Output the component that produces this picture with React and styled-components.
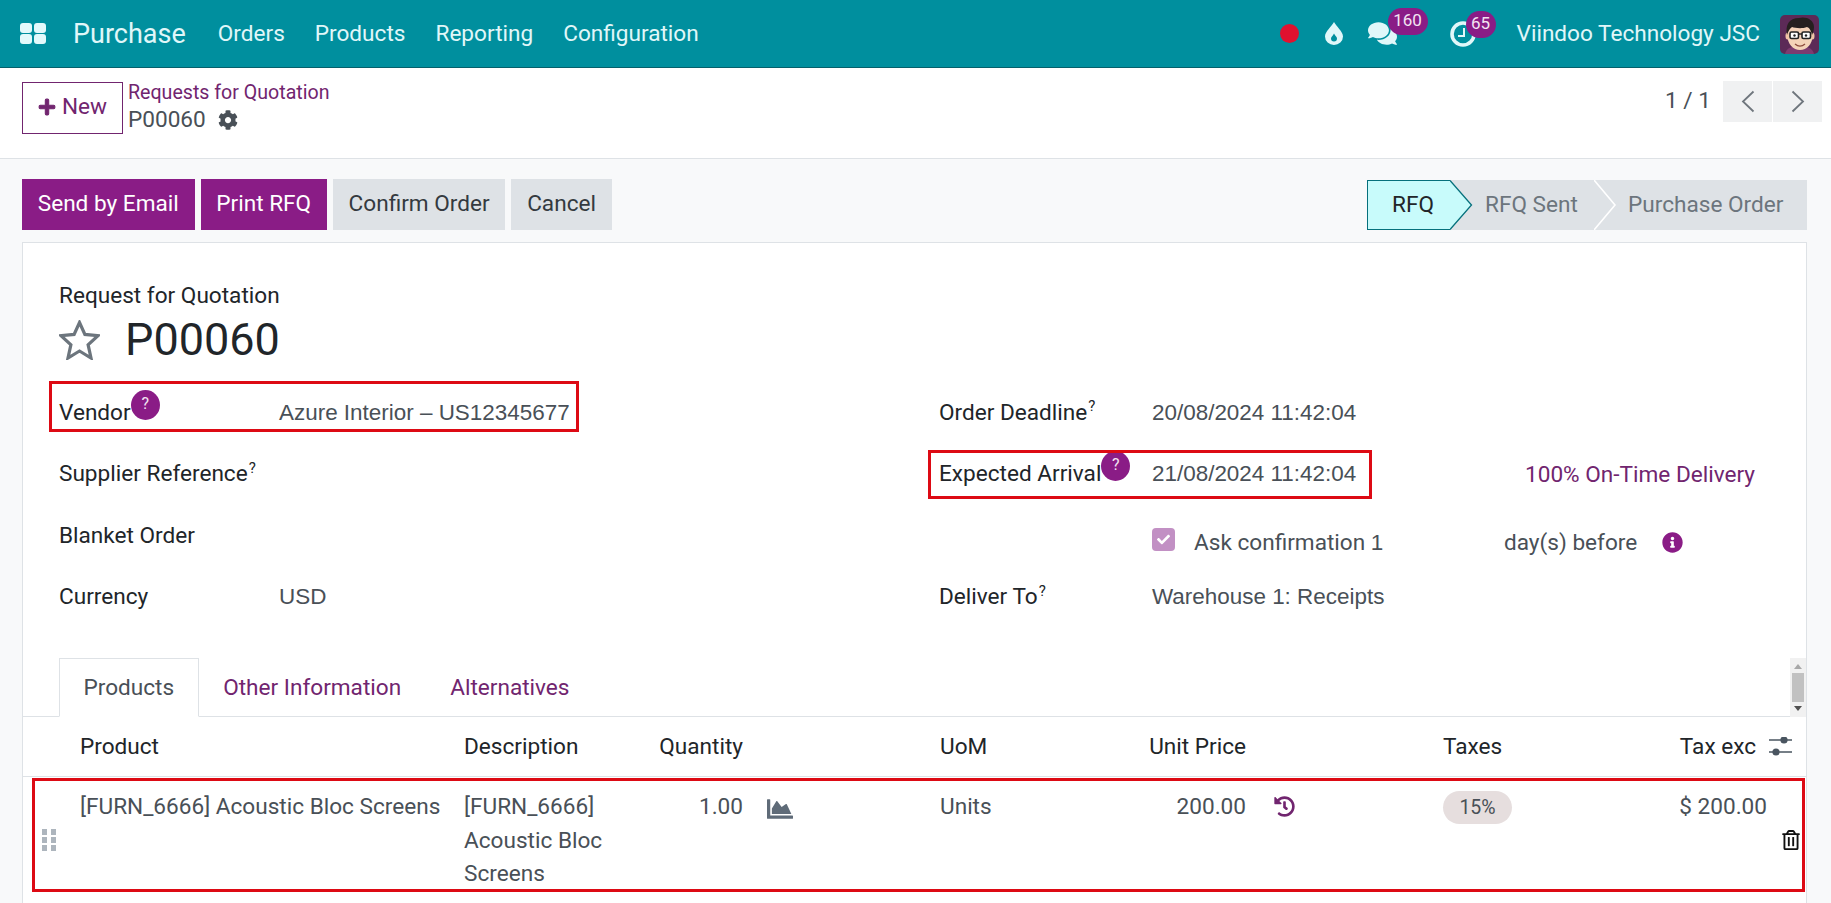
import React from 'react';
import styled, { createGlobalStyle } from 'styled-components';
import {
  FaPlus, FaCog, FaComments, FaChartArea, FaHistory, FaRegTrashAlt, FaInfoCircle, FaCheck,
} from 'react-icons/fa';

const purple = '#8a1c86';
const link = '#71256f';
const navText = '#e0f7f9';
const columns = '57px 384px 176px 103px 197px 170px 136px 197px 197px 127px 40px';

const GlobalStyle = createGlobalStyle`
  html, body { margin: 0; height: 100%; overflow: hidden; }
  body {
    background: #f8f9fa;
    color: #212529;
    font-family: Roboto, "Liberation Sans", sans-serif;
    font-size: 22.6px;
    line-height: 30px;
  }
`;

const Page = styled.div`
  height: 903px;
  display: flex;
  flex-direction: column;
`;

const Navbar = styled.header`
  height: 67px;
  flex: none;
  display: flex;
  align-items: center;
  background: #008f9e;
  border-bottom: 1px solid #05606b;
  color: ${navText};
  padding: 0 12px 0 20px;
`;

const AppsGrid = styled.div`
  display: grid;
  grid-template-columns: 12px 12px;
  grid-template-rows: 10px 10px;
  gap: 1px 2px;
  margin-right: 27px;
  span { background: #e3f9fb; border-radius: 3px; }
`;

const Brand = styled.span`
  font-size: 27px;
  margin-right: 32px;
`;

const NavMenu = styled.nav`
  display: flex;
  gap: 30px;
  padding-top: 1px;
`;

const NavTools = styled.div`
  margin-left: auto;
  display: flex;
  align-items: center;
`;

const RecordDot = styled.span`
  width: 19px;
  height: 19px;
  border-radius: 50%;
  background: #e0112f;
  margin-right: 26px;
`;

const NavIcon = styled.span`
  position: relative;
  display: flex;
  margin-right: ${p => p.$gap}px;
`;

const Counter = styled.span`
  position: absolute;
  left: ${p => p.$left}px;
  top: ${p => p.$top}px;
  min-width: ${p => p.$width}px;
  height: 27px;
  border-radius: 14px;
  background: ${purple};
  color: #f3e4f2;
  font-size: 17px;
  line-height: 25px;
  text-align: center;
`;

const Company = styled.span`
  margin-right: 20px;
  padding-top: 1px;
`;

const Avatar = styled.svg`
  width: 39px;
  height: 39px;
  margin-top: 2px;
`;

const ControlPanel = styled.section`
  height: 91px;
  flex: none;
  box-sizing: border-box;
  display: flex;
  justify-content: space-between;
  background: #fff;
  border-bottom: 1px solid #dee2e6;
  padding: 13px 9px 0 22px;
`;

const PanelLeft = styled.div`
  display: flex;
  gap: 5px;
`;

const NewButton = styled.button`
  width: 101px;
  height: 52px;
  margin-top: 1px;
  display: flex;
  align-items: center;
  justify-content: center;
  gap: 6px;
  background: #fff;
  border: 1px solid ${link};
  color: ${link};
  font: inherit;
  padding: 0 0 2px;
`;

const Crumbs = styled.div`
  display: flex;
  flex-direction: column;
  margin-top: -2px;
`;

const CrumbLink = styled.a`
  color: ${link};
  font-size: 19.6px;
  line-height: 28px;
`;

const CrumbCurrent = styled.div`
  display: flex;
  align-items: center;
  gap: 12px;
  color: #495057;
  line-height: 25px;
`;

const Pager = styled.div`
  display: flex;
  align-items: flex-start;
  color: #495057;
`;

const PagerCount = styled.span`
  margin: 5px 12px 0 0;
`;

const PagerButton = styled.button`
  width: 49px;
  height: 41px;
  margin-left: ${p => (p.$next ? 1 : 0)}px;
  display: flex;
  align-items: center;
  justify-content: center;
  background: #f0f1f2;
  border: 0;
  padding: 0;
`;

const ActionBar = styled.section`
  flex: none;
  display: flex;
  justify-content: space-between;
  align-items: flex-start;
  padding: 20px 24px 12px 22px;
`;

const Actions = styled.div`
  display: flex;
  gap: 6px;
`;

const ActionButton = styled.button`
  height: 51px;
  padding: 0 15.75px 2px;
  border: 0;
  font: inherit;
  background: ${p => (p.$primary ? purple : '#dee2e6')};
  color: ${p => (p.$primary ? '#fff' : '#343a40')};
`;

const StatusBar = styled.div`
  display: flex;
  height: 50px;
  margin-top: 1px;
`;

const Stage = styled.div`
  position: relative;
  z-index: ${p => p.$z};
  box-sizing: border-box;
  width: ${p => p.$width}px;
  padding-left: ${p => p.$pad}px;
  line-height: 48px;
  background: ${p => (p.$current ? '#c8fbfb' : '#dee2e6')};
  color: ${p => (p.$current ? '#212529' : '#6c757d')};
  border: ${p => (p.$current ? '1px solid #05707c' : '0')};
  border-right: 0;
  ${p => !p.$current && 'line-height: 50px;'}
`;

const StageTip = styled.svg`
  position: absolute;
  left: 100%;
  top: ${p => (p.$current ? -1 : 0)}px;
  width: 23px;
  height: 50px;
`;

const Sheet = styled.main`
  flex: 1;
  min-height: 0;
  margin: 0 24px 0 22px;
  background: #fff;
  border: 1px solid #dee2e6;
  border-bottom: 0;
`;

const SheetHead = styled.div`
  padding: 38px 0 0 36px;
`;

const TitleRow = styled.div`
  display: flex;
  align-items: center;
  gap: 25px;
  margin-top: 2px;
`;

const Title = styled.h1`
  margin: 0;
  font-size: 45px;
  font-weight: 400;
  line-height: 54px;
`;

const FieldGroups = styled.div`
  display: grid;
  grid-template-columns: 880px 1fr;
  margin: 15px 0 30px 36px;
`;

const FieldColumn = styled.div`
  display: grid;
  grid-auto-rows: 61.5px;
`;

const FieldRow = styled.div`
  position: relative;
  display: grid;
  grid-template-columns: ${p => p.$cols};
  align-items: center;
  padding-top: ${p => p.$shift || 0}px;
`;

const Label = styled.label`
  position: relative;
  justify-self: start;
  color: #212529;
  sup {
    font-size: 15px;
    line-height: 0;
    margin-left: 1px;
  }
`;

const HelpBadge = styled.span`
  position: absolute;
  left: 100%;
  top: -8px;
  width: 29px;
  height: 30px;
  border-radius: 50%;
  background: ${purple};
  color: #f3e4f2;
  font-size: 16px;
  line-height: 27px;
  text-align: center;
`;

/* form inputs fall back to an Arial-width face in the original */
const Value = styled.span`
  color: #495057;
  font-family: "Liberation Sans", Arial, sans-serif;
  font-size: 22.45px;
`;

const DeliveryLink = styled.a`
  color: ${link};
  padding-top: 1px;
`;

const RedMark = styled.span`
  position: absolute;
  left: ${p => p.$left}px;
  top: ${p => p.$top}px;
  width: ${p => p.$width}px;
  height: ${p => p.$height}px;
  box-sizing: border-box;
  border: 3px solid #dd0a14;
  pointer-events: none;
`;

const AskRow = styled.div`
  display: flex;
  align-items: center;
  color: #495057;
`;

const CheckBox = styled.span`
  width: 23px;
  height: 23px;
  margin: 0 19px 7px 0;
  display: flex;
  align-items: center;
  justify-content: center;
  border-radius: 4px;
  background: #c290c4;
  color: #fff;
`;

const AskText = styled.span`
  width: 310px;
`;

const BeforeText = styled.span`
  margin-right: 25px;
`;

const TabBar = styled.div`
  display: flex;
  height: 59px;
  padding-left: 36px;
  border-bottom: 1px solid #dee2e6;
  box-sizing: border-box;
`;

const Tab = styled.a`
  padding: 0 23.5px;
  line-height: 58px;
  height: 59px;
  box-sizing: border-box;
  color: ${p => (p.$active ? '#495057' : link)};
  background: ${p => (p.$active ? '#fff' : 'transparent')};
  border: 1px solid ${p => (p.$active ? '#dee2e6' : 'transparent')};
  border-bottom-color: ${p => (p.$active ? '#fff' : 'transparent')};
`;

const ScrollTrack = styled.div`
  margin-left: auto;
  width: 16px;
  height: 59px;
  display: flex;
  flex-direction: column;
  align-items: center;
  justify-content: space-between;
  background: #f1f1f1;
  padding: 6px 0;
  box-sizing: border-box;
`;

const ScrollArrow = styled.span`
  width: 0;
  height: 0;
  border-left: 4px solid transparent;
  border-right: 4px solid transparent;
  border-bottom: ${p => (p.$down ? '0' : '5px solid #a8a8a8')};
  border-top: ${p => (p.$down ? '5px solid #505050' : '0')};
`;

const ScrollThumb = styled.span`
  width: 12px;
  height: 29px;
  background: #c1c1c1;
`;

const TableHead = styled.div`
  display: grid;
  grid-template-columns: ${columns};
  height: 60px;
  box-sizing: border-box;
  align-items: center;
  border-bottom: 1px solid #dee2e6;
`;

const TableRow = styled.div`
  position: relative;
  display: grid;
  grid-template-columns: ${columns};
  padding: 13px 0 10px;
  color: #495057;
  line-height: 33.5px;
`;

const HeadCell = styled.div`
  grid-column: ${p => p.$col};
  text-align: ${p => (p.$right ? 'right' : 'left')};
  padding-right: ${p => p.$pad || 0}px;
`;

const Cell = styled.div`
  grid-column: ${p => p.$col};
  text-align: ${p => (p.$right ? 'right' : 'left')};
`;

const IconCell = styled.div`
  grid-column: ${p => p.$col};
  display: flex;
  align-items: flex-start;
  padding: 6px 0 0 ${p => p.$pad}px;
  color: ${p => p.$color};
`;

const SideCell = styled.div`
  grid-column: ${p => p.$col};
  align-self: center;
  display: flex;
  padding-left: ${p => p.$pad}px;
`;

const TaxPill = styled.span`
  display: inline-block;
  width: 69px;
  height: 33px;
  border-radius: 17px;
  background: #e6dede;
  font-size: 19.5px;
  text-align: center;
`;

const Sliders = () => (
  <svg width="23" height="19" viewBox="0 0 23 19">
    <path d="M0 3h23M0 15h23" stroke="#4a5560" strokeWidth="1.4" />
    <circle cx="15" cy="3" r="3.6" fill="#4a5560" />
    <circle cx="7" cy="15" r="3.6" fill="#4a5560" />
  </svg>
);

const Grip = () => (
  <svg width="14" height="22" viewBox="0 0 14 22" fill="#adb5bd">
    <rect x="0" y="0" width="5" height="6" />
    <rect x="9" y="0" width="5" height="6" />
    <rect x="0" y="8" width="5" height="6" />
    <rect x="9" y="8" width="5" height="6" />
    <rect x="0" y="16" width="5" height="6" />
    <rect x="9" y="16" width="5" height="6" />
  </svg>
);

const Star = () => (
  <svg width="41" height="40" viewBox="0 0 41 40">
    <polygon
      points="20.5,2.500 25.9,14.400 39,15.700 29.100,24.700 32,38 20.500,31 9,38 11.900,24.700 2,15.700 15.100,14.400"
      fill="none"
      stroke="#6c757d"
      strokeWidth="3.2"
    />
  </svg>
);

const Chevron = ({ left }) => (
  <svg width="14" height="23" viewBox="0 0 14 23">
    <path
      d={left ? 'M12.5 1.5 L2 11.5 L12.5 21.5' : 'M1.5 1.5 L12 11.5 L1.5 21.5'}
      fill="none"
      stroke="#6f767d"
      strokeWidth="1.8"
    />
  </svg>
);

const Droplet = () => (
  <svg width="18" height="23" viewBox="0 0 18 23">
    <path d="M9 0C7 4 0 9.500 0 14.500A9 8.500 0 0 0 18 14.500C18 9.500 11 4 9 0Z" fill={navText} />
    <path d="M9 11.500C8 13.500 6 15 6 16.500A3 3 0 0 0 12 16.500C12 15 10 13.500 9 11.500Z" fill="#008f9e" />
  </svg>
);

const ClockRing = () => (
  <svg width="26" height="26" viewBox="0 0 26 26">
    <circle cx="13" cy="13" r="11" fill="none" stroke={navText} strokeWidth="3.6" />
    <path d="M14 7v8H8" fill="none" stroke={navText} strokeWidth="2" />
  </svg>
);

const Face = () => (
  <Avatar viewBox="0 0 39 39">
    <rect width="39" height="39" rx="5" fill="#5c2a57" />
    <path d="M5 39C6 33 12 31 19 31s14 2 15 8Z" fill="#7d3b70" />
    <ellipse cx="20" cy="21" rx="12.500" ry="14" fill="#f4d2b8" />
    <ellipse cx="7.500" cy="21" rx="2" ry="3.500" fill="#f0c4a6" />
    <ellipse cx="32.500" cy="21" rx="2" ry="3.500" fill="#f0c4a6" />
    <path d="M7 20C5 10 9 3 19 3c6-2 15 1 15 9 0 3-1 6-2 8-1-4-2-7-5-8-5 2-12 1-15 0-3 2-4 5-5 8Z" fill="#26201f" />
    <rect x="10" y="17" width="8.500" height="6.500" rx="1.500" fill="#fff" stroke="#222" strokeWidth="1.6" />
    <rect x="22" y="17" width="8.500" height="6.500" rx="1.500" fill="#fff" stroke="#222" strokeWidth="1.6" />
    <path d="M18.500 19h3.500" stroke="#222" strokeWidth="1.4" />
    <circle cx="14.500" cy="20.500" r="1.200" fill="#222" />
    <circle cx="26" cy="20.500" r="1.200" fill="#222" />
    <path d="M15 29c3 2.500 7 2.500 10 0" fill="none" stroke="#8c4a3c" strokeWidth="1.3" />
  </Avatar>
);

const App = () => (
  <Page>
    <GlobalStyle />
    <Navbar>
      <AppsGrid><span /><span /><span /><span /></AppsGrid>
      <Brand>Purchase</Brand>
      <NavMenu>
        <span>Orders</span>
        <span>Products</span>
        <span>Reporting</span>
        <span>Configuration</span>
      </NavMenu>
      <NavTools>
        <RecordDot />
        <NavIcon $gap={25}><Droplet /></NavIcon>
        <NavIcon $gap={53}>
          <FaComments size={29} />
          <Counter $left={20} $top={-11} $width={40}>160</Counter>
        </NavIcon>
        <NavIcon $gap={41}>
          <ClockRing />
          <Counter $left={16} $top={-10} $width={30}>65</Counter>
        </NavIcon>
        <Company>Viindoo Technology JSC</Company>
        <Face />
      </NavTools>
    </Navbar>

    <ControlPanel>
      <PanelLeft>
        <NewButton><FaPlus size={18} stroke="currentColor" strokeWidth={30} />New</NewButton>
        <Crumbs>
          <CrumbLink>Requests for Quotation</CrumbLink>
          <CrumbCurrent>P00060 <FaCog size={20} /></CrumbCurrent>
        </Crumbs>
      </PanelLeft>
      <Pager>
        <PagerCount>1 / 1</PagerCount>
        <PagerButton><Chevron left /></PagerButton>
        <PagerButton $next><Chevron /></PagerButton>
      </Pager>
    </ControlPanel>

    <ActionBar>
      <Actions>
        <ActionButton $primary>Send by Email</ActionButton>
        <ActionButton $primary>Print RFQ</ActionButton>
        <ActionButton>Confirm Order</ActionButton>
        <ActionButton>Cancel</ActionButton>
      </Actions>
      <StatusBar>
        <Stage $current $z={3} $width={83} $pad={24}>
          RFQ
          <StageTip $current viewBox="0 0 23 50">
            <path d="M0 0.500 L21.500 25 L0 49.500Z" fill="#c8fbfb" />
            <path d="M0 0.500 L21.500 25 L0 49.500" fill="none" stroke="#05707c" strokeWidth="1.3" />
          </StageTip>
        </Stage>
        <Stage $z={2} $width={144} $pad={35}>
          RFQ Sent
          <StageTip viewBox="0 0 23 50">
            <path d="M0 0 L21 25 L0 50Z" fill="#dee2e6" />
            <path d="M0 0 L21 25 L0 50" fill="none" stroke="#fff" strokeWidth="1.6" />
          </StageTip>
        </Stage>
        <Stage $z={1} $width={213} $pad={34}>Purchase Order</Stage>
      </StatusBar>
    </ActionBar>

    <Sheet>
      <SheetHead>
        <div>Request for Quotation</div>
        <TitleRow>
          <Star />
          <Title>P00060</Title>
        </TitleRow>
      </SheetHead>

      <FieldGroups>
        <FieldColumn>
          <FieldRow $cols="220px 1fr">
            <Label>Vendor<HelpBadge>?</HelpBadge></Label>
            <Value>Azure Interior – US12345677</Value>
            <RedMark $left={-10} $top={-1} $width={530} $height={51} />
          </FieldRow>
          <FieldRow $cols="220px 1fr"><Label>Supplier Reference<sup>?</sup></Label></FieldRow>
          <FieldRow $cols="220px 1fr"><Label>Blanket Order</Label></FieldRow>
          <FieldRow $cols="220px 1fr"><Label>Currency</Label><Value>USD</Value></FieldRow>
        </FieldColumn>
        <FieldColumn>
          <FieldRow $cols="213px 1fr">
            <Label>Order Deadline<sup>?</sup></Label>
            <Value>20/08/2024 11:42:04</Value>
          </FieldRow>
          <FieldRow $cols="213px 373px 1fr">
            <Label>Expected Arrival<HelpBadge>?</HelpBadge></Label>
            <Value>21/08/2024 11:42:04</Value>
            <DeliveryLink>100% On-Time Delivery</DeliveryLink>
            <RedMark $left={-11} $top={6} $width={444} $height={49} />
          </FieldRow>
          <FieldRow $cols="213px 1fr" $shift={14}>
            <span />
            <AskRow>
              <CheckBox><FaCheck size={13} /></CheckBox>
              <AskText>Ask confirmation <Value>1</Value></AskText>
              <BeforeText>day(s) before</BeforeText>
              <FaInfoCircle size={21} color={purple} />
            </AskRow>
          </FieldRow>
          <FieldRow $cols="213px 1fr">
            <Label>Deliver To<sup>?</sup></Label>
            <Value>Warehouse 1: Receipts</Value>
          </FieldRow>
        </FieldColumn>
      </FieldGroups>

      <TabBar>
        <Tab $active>Products</Tab>
        <Tab>Other Information</Tab>
        <Tab>Alternatives</Tab>
        <ScrollTrack>
          <ScrollArrow />
          <ScrollThumb />
          <ScrollArrow $down />
        </ScrollTrack>
      </TabBar>

      <TableHead>
        <HeadCell $col={2}>Product</HeadCell>
        <HeadCell $col={3}>Description</HeadCell>
        <HeadCell $col={4} $right>Quantity</HeadCell>
        <HeadCell $col={6}>UoM</HeadCell>
        <HeadCell $col={7} $right>Unit Price</HeadCell>
        <HeadCell $col={9}>Taxes</HeadCell>
        <HeadCell $col={10} $right $pad={11}>Tax exc</HeadCell>
        <SideCell $col={11} $pad={2}><Sliders /></SideCell>
      </TableHead>

      <TableRow>
        <SideCell $col={1} $pad={19}><Grip /></SideCell>
        <Cell $col={2}>[FURN_6666] Acoustic Bloc Screens</Cell>
        <Cell $col={3}>[FURN_6666] Acoustic Bloc Screens</Cell>
        <Cell $col={4} $right>1.00</Cell>
        <IconCell $col={5} $pad={24} $color="#5f6b78"><FaChartArea size={26} /></IconCell>
        <Cell $col={6}>Units</Cell>
        <Cell $col={7} $right>200.00</Cell>
        <IconCell $col={8} $pad={28} $color={link}><FaHistory size={21} /></IconCell>
        <Cell $col={9}><TaxPill>15%</TaxPill></Cell>
        <Cell $col={10} $right>$ 200.00</Cell>
        <SideCell $col={11} $pad={14}><FaRegTrashAlt size={20} color="#111" /></SideCell>
        <RedMark $left={9} $top={1} $width={1773} $height={114} />
      </TableRow>
    </Sheet>
  </Page>
);

export default App;
